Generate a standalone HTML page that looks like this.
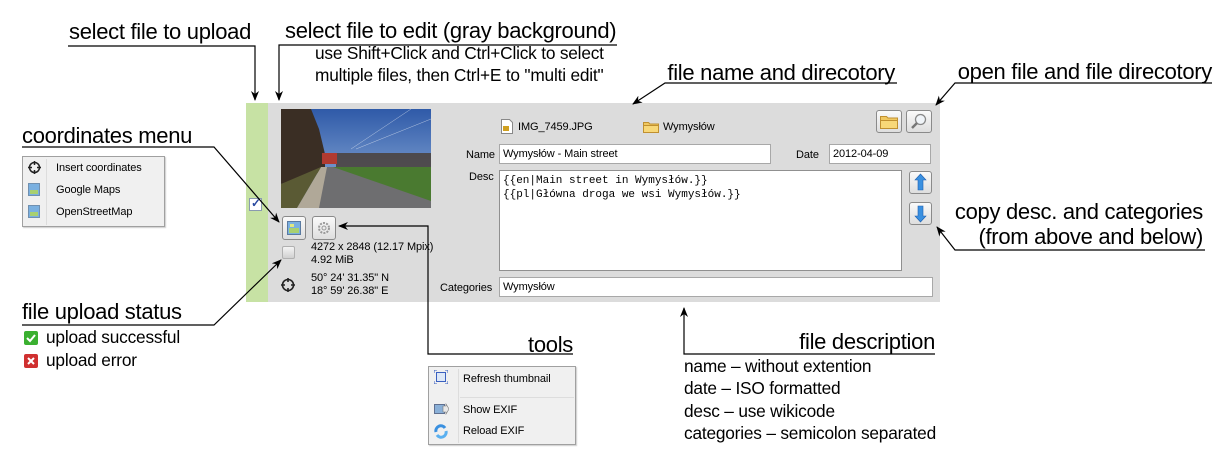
<!DOCTYPE html>
<html><head><meta charset="utf-8">
<style>
*{margin:0;padding:0;box-sizing:border-box}
body{width:1224px;height:463px;background:#fff;position:relative;overflow:hidden;font-family:"Liberation Sans",sans-serif;color:#000}
.a{position:absolute;white-space:nowrap}
.big{font-size:22px;letter-spacing:-0.3px}
.med{font-size:17.3px;letter-spacing:-0.2px}
.ui{font-size:11px;letter-spacing:-0.1px}
.inp{position:absolute;background:#fff;border:1px solid #a8a8a8;font-size:11px;padding:3px 3px;letter-spacing:-0.1px}
.btn{position:absolute;border:1px solid #8a8a8a;border-radius:3px;background:linear-gradient(#fafafa,#dedede)}
.menu{position:absolute;background:#f0f0f0;border:1px solid #a0a0a0;box-shadow:1px 1px 1px #ccc}
</style></head><body>

<div class="a" style="left:246px;top:103px;width:22px;height:199px;background:#c7e2a4"></div>
<div class="a" style="left:268px;top:103px;width:672px;height:199px;background:#dcdcdc"></div>

<svg class="a" style="left:281px;top:109px" width="150" height="99" viewBox="0 0 150 99">
<defs><linearGradient id="sky" x1="0" y1="0" x2="0" y2="1"><stop offset="0" stop-color="#2f5aa8"/><stop offset="1" stop-color="#9ab8e0"/></linearGradient></defs>
<rect width="150" height="99" fill="url(#sky)"/>
<polygon points="0,0 30,0 38,20 44,45 44,62 0,75" fill="#3a2e24"/>
<rect x="55" y="44" width="95" height="16" fill="#4a4038" opacity=".85"/>
<rect x="41" y="44" width="15" height="11" fill="#b03a30"/>
<polygon points="40,58 150,58 150,99 20,99" fill="#4a7a30"/>
<polygon points="45,58 52,58 150,92 150,99 25,99" fill="#6e6e70"/>
<polygon points="40,58 46,58 38,99 16,99" fill="#b0a898"/>
<polygon points="0,75 40,58 16,99 0,99" fill="#5a5a34"/>
<line x1="70" y1="40" x2="130" y2="0" stroke="#fff" stroke-width=".5" opacity=".6"/>
<line x1="75" y1="40" x2="150" y2="10" stroke="#fff" stroke-width=".5" opacity=".6"/>
</svg>

<div class="a" style="left:249px;top:198px;width:13px;height:13px;border:1px solid #8a9ab0;background:#fff"></div>
<div class="a" style="left:251px;top:196px;font-size:12px;color:#2a4aa0;font-weight:bold">✓</div>

<div class="btn" style="left:282px;top:216px;width:24px;height:24px"></div>
<svg class="a" style="left:287px;top:221px" width="14" height="14"><rect x=".5" y=".5" width="13" height="13" fill="#7ab0e0" stroke="#5a7aa0"/><rect x="2" y="7" width="10" height="5" fill="#a8d070"/><rect x="3" y="3" width="4" height="3" fill="#e0e880"/></svg>
<div class="btn" style="left:312px;top:216px;width:24px;height:24px"></div>
<svg class="a" style="left:317px;top:221px" width="14" height="14"><circle cx="7" cy="7" r="5" fill="none" stroke="#999" stroke-width="2" stroke-dasharray="2 1.2"/><circle cx="7" cy="7" r="2" fill="none" stroke="#999"/></svg>

<div class="a" style="left:282px;top:246px;width:13px;height:13px;border:1px solid #b0b0b0;border-radius:2px;background:linear-gradient(#f4f4f4,#d0d0d0)"></div>
<div class="a ui" style="left:311px;top:241px;line-height:13px">4272 x 2848 (12.17 Mpix)<br>4.92 MiB</div>
<svg class="a" style="left:281px;top:278px" width="14" height="14"><circle cx="7" cy="7" r="5.5" fill="none" stroke="#222" stroke-width="1.6"/><path d="M7 0v4M7 10v4M0 7h4M10 7h4" stroke="#222" stroke-width="1.6"/></svg>
<div class="a ui" style="left:311px;top:272px;line-height:13px">50° 24' 31.35" N<br>18° 59' 26.38" E</div>

<svg class="a" style="left:501px;top:119px" width="12" height="15"><path d="M.5 .5h8l3 3v11h-11z" fill="#fff" stroke="#888"/><rect x="2" y="7" width="6" height="5" fill="#d0a020"/></svg>
<div class="a ui" style="left:518px;top:121px">IMG_7459.JPG</div>
<svg class="a" style="left:643px;top:120px" width="16" height="13"><path d="M.5 2.5h5l1.5 1.5h8.5v8.5h-15z" fill="#f0c860" stroke="#c09030"/><path d="M.5 5.5h15v7h-15z" fill="#f8d878" stroke="#c09030"/></svg>
<div class="a ui" style="left:663px;top:121px">Wymysłów</div>

<div class="btn" style="left:876px;top:110px;width:26px;height:23px"></div>
<svg class="a" style="left:880px;top:114px" width="18" height="15"><path d="M.5 2.5h6l1.5 1.5h9.5v10h-17z" fill="#f0c860" stroke="#c09030"/><path d="M.5 6.5h17v8h-17z" fill="#f8d878" stroke="#c09030"/></svg>
<div class="btn" style="left:906px;top:110px;width:26px;height:23px"></div>
<svg class="a" style="left:910px;top:113px" width="18" height="17"><circle cx="10.5" cy="6.5" r="5" fill="#f0f4f8" stroke="#888" stroke-width="1.3"/><path d="M7 10L2 15" stroke="#777" stroke-width="2.5"/></svg>

<div class="a ui" style="left:466px;top:149px">Name</div>
<div class="inp" style="left:499px;top:144px;width:272px;height:20px">Wymysłów - Main street</div>
<div class="a ui" style="left:796px;top:149px">Date</div>
<div class="inp" style="left:829px;top:144px;width:102px;height:20px">2012-04-09</div>

<div class="a ui" style="left:469px;top:171px">Desc</div>
<div class="inp" style="left:499px;top:170px;width:403px;height:101px;border-color:#909090;font-family:'Liberation Mono',monospace;font-size:11px;line-height:14px;letter-spacing:0">{{en|Main street in Wymysłów.}}<br>{{pl|Główna droga we wsi Wymysłów.}}</div>

<div class="btn" style="left:909px;top:171px;width:23px;height:23px"></div>
<svg class="a" style="left:914px;top:173px" width="13" height="18"><path d="M6.5 1L12 7H9v10H4V7H1z" fill="#3a90e0" stroke="#2060b0" stroke-width=".6"/></svg>
<div class="btn" style="left:909px;top:202px;width:23px;height:23px"></div>
<svg class="a" style="left:914px;top:205px" width="13" height="18"><path d="M6.5 17L12 11H9V1H4v10H1z" fill="#3a90e0" stroke="#2060b0" stroke-width=".6"/></svg>

<div class="a ui" style="left:440px;top:282px">Categories</div>
<div class="inp" style="left:499px;top:277px;width:434px;height:20px">Wymysłów</div>

<div class="menu" style="left:22px;top:156px;width:143px;height:71px">
<div class="a" style="left:23px;top:2px;width:1px;height:66px;background:#ddd"></div>
</div>
<svg class="a" style="left:28px;top:161px" width="13" height="13"><circle cx="6.5" cy="6.5" r="5" fill="none" stroke="#222" stroke-width="1.5"/><path d="M6.5 0v4M6.5 9v4M0 6.5h4M9 6.5h4" stroke="#222" stroke-width="1.5"/></svg>
<div class="a ui" style="left:56px;top:162px">Insert coordinates</div>
<svg class="a" style="left:28px;top:183px" width="12" height="13"><rect x=".5" y=".5" width="11" height="12" fill="#7ab0e0" stroke="#7090b0"/><rect x="2" y="7" width="8" height="4" fill="#a8d070"/></svg>
<div class="a ui" style="left:56px;top:184px">Google Maps</div>
<svg class="a" style="left:28px;top:205px" width="12" height="13"><rect x=".5" y=".5" width="11" height="12" fill="#7ab0e0" stroke="#7090b0"/><rect x="2" y="7" width="8" height="4" fill="#a8d070"/></svg>
<div class="a ui" style="left:56px;top:206px">OpenStreetMap</div>

<div class="menu" style="left:428px;top:366px;width:148px;height:79px">
<div class="a" style="left:29px;top:2px;width:1px;height:74px;background:#ddd"></div>
<div class="a" style="left:31px;top:30px;width:114px;height:1px;background:#ddd"></div>
</div>
<svg class="a" style="left:434px;top:370px" width="14" height="14"><rect x="2.5" y="2.5" width="9" height="9" fill="#dde8f8" stroke="#3a60c0"/><path d="M0 3V0h3M11 0h3v3M14 11v3h-3M3 14H0v-3" fill="none" stroke="#3a60c0"/></svg>
<div class="a ui" style="left:463px;top:373px">Refresh thumbnail</div>
<svg class="a" style="left:434px;top:403px" width="15" height="12"><rect x=".5" y="1.5" width="10" height="9" fill="#8ab0d8" stroke="#607090"/><path d="M9 3h3V1l3 5-3 5V9H9z" fill="#e8e8e8" stroke="#777" stroke-width=".6"/></svg>
<div class="a ui" style="left:463px;top:404px">Show EXIF</div>
<svg class="a" style="left:434px;top:424px" width="14" height="15"><path d="M2 8a5 5 0 0 1 9-4" fill="none" stroke="#3a90e0" stroke-width="3"/><path d="M12 7a5 5 0 0 1-9 4" fill="none" stroke="#5ab0f0" stroke-width="3"/></svg>
<div class="a ui" style="left:463px;top:425px">Reload EXIF</div>

<div class="a big" style="left:69px;top:19px">select file to upload</div>
<div class="a big" style="left:285px;top:18px">select file to edit (gray background)</div>
<div class="a med" style="left:315px;top:43px">use Shift+Click and Ctrl+Click to select</div>
<div class="a med" style="left:315px;top:65px">multiple files, then Ctrl+E to "multi edit"</div>
<div class="a big" style="right:329px;top:60px">file name and direcotory</div>
<div class="a big" style="right:12px;top:59px">open file and file direcotory</div>
<div class="a big" style="left:22px;top:123px">coordinates menu</div>
<div class="a big" style="right:21px;top:199px">copy desc. and categories</div>
<div class="a big" style="right:21px;top:224px">(from above and below)</div>
<div class="a big" style="left:22px;top:299px">file upload status</div>
<div class="a big" style="right:651px;top:332px">tools</div>
<div class="a big" style="right:289px;top:329px">file description</div>
<div class="a med" style="left:684px;top:356px">name – without extention</div>
<div class="a med" style="left:684px;top:378px">date – ISO formatted</div>
<div class="a med" style="left:684px;top:401px">desc – use wikicode</div>
<div class="a med" style="left:684px;top:423px">categories – semicolon separated</div>

<svg class="a" style="left:24px;top:331px" width="14" height="14"><rect width="14" height="14" rx="2" fill="#3ab030"/><path d="M3 7l3 3 5-6" fill="none" stroke="#fff" stroke-width="2"/></svg>
<div class="a med" style="left:46px;top:327px">upload successful</div>
<svg class="a" style="left:24px;top:354px" width="14" height="14"><rect width="14" height="14" rx="2" fill="#d03030"/><path d="M4 4l6 6M10 4l-6 6" stroke="#fff" stroke-width="2"/></svg>
<div class="a med" style="left:46px;top:350px">upload error</div>

<svg class="a" style="left:0;top:0" width="1224" height="463">
<defs><marker id="ar" markerWidth="10" markerHeight="8" refX="9" refY="4" orient="auto" markerUnits="userSpaceOnUse"><path d="M0 0L10 4 0 8 3 4z" fill="#000"/></marker></defs>
<g fill="none" stroke="#000" stroke-width="1.2">
<path d="M68 46H255V100" marker-end="url(#ar)"/>
<path d="M617 45H279V100" marker-end="url(#ar)"/>
<path d="M897 83H665L633 104" marker-end="url(#ar)"/>
<path d="M1212 83H955L936 105" marker-end="url(#ar)"/>
<path d="M22 147H214L279 222" marker-end="url(#ar)"/>
<path d="M22 325H214L281 260" marker-end="url(#ar)"/>
<path d="M573 354H428V226H339" marker-end="url(#ar)"/>
<path d="M1205 250H955L937 227" marker-end="url(#ar)"/>
<path d="M935 354H684V308" marker-end="url(#ar)"/>
</g>
</svg>
</body></html>
